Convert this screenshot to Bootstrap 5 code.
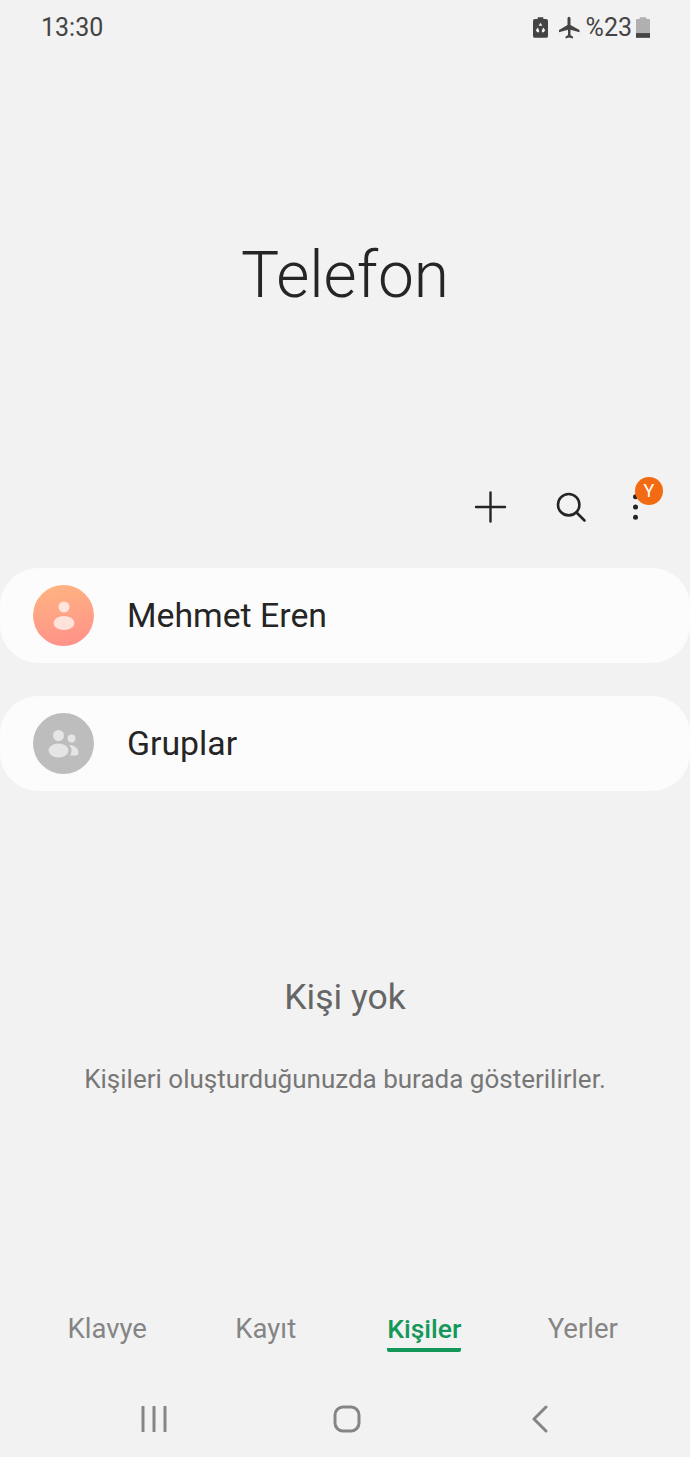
<!DOCTYPE html>
<html lang="tr">

<head>
  <meta charset="UTF-8">
  <title>Telefon</title>
  <link href="https://cdn.jsdelivr.net/npm/bootstrap@5.3.3/dist/css/bootstrap.min.css" rel="stylesheet">
  <script src="https://cdn.jsdelivr.net/npm/bootstrap@5.3.3/dist/js/bootstrap.bundle.min.js"></script>

  <style>
    html,
    body {
      height: 1457px;
      overflow: hidden;
    }

    body {
      background-color: #f2f2f2;
      font-family: Roboto, "Liberation Sans", sans-serif;
      color: #252525;
    }

    .phone-screen {
      width: 690px;
      height: 1457px;
    }

    .phone-screen > * {
      flex-shrink: 0;
    }

    .status-bar {
      height: 53px;
      padding: 2px 40px 0 41px;
      color: #444;
      font-size: 25px;
    }

    .status-right {
      gap: 5px;
    }

    .status-level {
      margin-right: -1px;
    }

    .app-title {
      height: 415px;
      padding-top: 183px;
      font-size: 64px;
      font-weight: 300;
      line-height: 80px;
      color: #252525;
    }

    .action-bar {
      height: 100px;
      padding-right: 49px;
      padding-bottom: 22px;
    }

    .action-item {
      position: relative;
      width: 34px;
      height: 34px;
    }

    .action-plus {
      margin-right: 47px;
    }

    .action-search {
      margin-right: 41px;
    }

    .action-more {
      width: 12px;
    }

    .more-badge {
      position: absolute;
      left: 6px;
      top: -13px;
      width: 28px;
      height: 28px;
      background-color: #f26b12;
      color: #fff;
      font-size: 18px;
      line-height: 28px;
      text-align: center;
      border-radius: 50%;
    }

    .pill-row {
      height: 95px;
      background-color: #fcfcfc;
      border-radius: 38px;
      padding-left: 33px;
      gap: 34px;
      font-size: 33.8px;
      margin-bottom: 33px;
    }

    .pill-name {
      padding-top: 2px;
      margin-left: -1px;
    }

    .avatar-circle {
      width: 61px;
      height: 61px;
      border-radius: 50%;
      flex-shrink: 0;
    }

    .avatar-me {
      background: linear-gradient(170deg, #ffb581, #ff8f8a);
    }

    .avatar-group {
      background-color: #bdbdbd;
    }

    .empty-block {
      padding-top: 148px;
      height: 484px;
    }

    .empty-title {
      font-size: 35.5px;
      line-height: 50px;
      color: #666;
    }

    .empty-text {
      font-size: 26px;
      line-height: 36px;
      color: #777;
      margin-top: 39px;
    }

    .tab-row {
      height: 72px;
      padding: 0 28px;
    }

    .tab-cell {
      width: 158.5px;
      text-align: center;
      font-size: 27.5px;
      color: #858585;
    }

    .tab-label {
      display: inline-block;
      line-height: 36px;
      height: 41px;
    }

    .tab-active {
      color: #14985a;
      font-weight: 500;
      font-size: 26.5px;
      border-bottom: 4px solid #14985a;
      border-radius: 2px;
    }

    .nav-keys {
      height: 78px;
      padding: 0 54px 0 57px;
    }
  </style>
</head>

<body>
  <div class="phone-screen d-flex flex-column">

    <div class="status-bar d-flex justify-content-between align-items-center">
      <span>13:30</span>
      <div class="status-right d-flex align-items-center">
        <svg width="15" height="21" viewBox="0 0 16 22">
          <path d="M5 0h6v2h3a2 2 0 0 1 2 2v16a2 2 0 0 1-2 2H2a2 2 0 0 1-2-2V4a2 2 0 0 1 2-2h3z" fill="#444" />
          <path d="M8 6l2 3H6zM11 11l2 3-1.500 2h-2v-2zM5 11l-2 3 1.500 2h2v-2z" fill="#f2f2f2" />
        </svg>
        <svg width="24" height="24" viewBox="0 0 24 24" class="ms-1">
          <path d="M10.500 2.500c0-1 .7-1.800 1.500-1.800s1.500.8 1.500 1.800V9l9 5v2.200l-9-2.500V19l2.500 1.800V22.500L12 21.500l-3.500 1v-1.700L11 19v-5.300l-9 2.500V14l8.500-5z" fill="#444" />
        </svg>
        <span class="status-level">%23</span>
        <svg width="14" height="21" viewBox="0 0 15 22">
          <path d="M4 0h7v2h3a1 1 0 0 1 1 1v19H0V3a1 1 0 0 1 1-1h3z" fill="#b0b0b0" />
          <rect y="17" width="15" height="5" fill="#444" />
        </svg>
      </div>
    </div>

    <div class="app-title text-center">Telefon</div>

    <div class="action-bar d-flex justify-content-end align-items-center">
      <div class="action-item action-plus">
        <svg width="34" height="34" viewBox="0 0 34 34">
          <path d="M17.500 2.500v29M3 17h29" stroke="#252525" stroke-width="2.400" stroke-linecap="round" />
        </svg>
      </div>
      <div class="action-item action-search">
        <svg width="34" height="34" viewBox="0 0 34 34">
          <circle cx="14.700" cy="14.700" r="10.700" fill="none" stroke="#252525" stroke-width="2.600" />
          <path d="M22.500 22.500l8 8" stroke="#252525" stroke-width="2.600" stroke-linecap="round" />
        </svg>
      </div>
      <div class="action-item action-more">
        <svg width="12" height="34" viewBox="0 0 12 34">
          <circle cx="6.500" cy="6.700" r="2.500" fill="#252525" />
          <circle cx="6.500" cy="17" r="2.500" fill="#252525" />
          <circle cx="6.500" cy="27.300" r="2.500" fill="#252525" />
        </svg>
        <span class="more-badge">Y</span>
      </div>
    </div>

    <div class="pill-row d-flex align-items-center">
      <div class="avatar-circle avatar-me d-flex align-items-center justify-content-center">
        <svg width="30" height="36" viewBox="0 0 30 36">
          <circle cx="15" cy="9" r="5.500" fill="#fff" opacity=".7" />
          <ellipse cx="15" cy="25" rx="10.500" ry="7" fill="#fff" opacity=".7" />
        </svg>
      </div>
      <span class="pill-name">Mehmet Eren</span>
    </div>

    <div class="pill-row d-flex align-items-center">
      <div class="avatar-circle avatar-group d-flex align-items-center justify-content-center">
        <svg width="34" height="34" viewBox="0 0 34 34">
          <circle cx="11.500" cy="8.500" r="5.500" fill="#fff" opacity=".6" />
          <circle cx="24.500" cy="11.500" r="4" fill="#fff" opacity=".6" />
          <ellipse cx="11.500" cy="23.500" rx="10" ry="7" fill="#fff" opacity=".6" />
          <path d="M22 18c5 0 9.500 3 9.500 8 0 1.500-1 2.500-2.500 2.500h-6c2-3 2.500-7 -1-10.500z" fill="#fff" opacity=".6" />
        </svg>
      </div>
      <span class="pill-name">Gruplar</span>
    </div>

    <div class="empty-block text-center">
      <div class="empty-title">Kişi yok</div>
      <div class="empty-text">Kişileri oluşturduğunuzda burada gösterilirler.</div>
    </div>

    <div class="tab-row d-flex">
      <div class="tab-cell"><span class="tab-label">Klavye</span></div>
      <div class="tab-cell"><span class="tab-label">Kayıt</span></div>
      <div class="tab-cell"><span class="tab-label tab-active">Kişiler</span></div>
      <div class="tab-cell"><span class="tab-label">Yerler</span></div>
    </div>

    <div class="nav-keys row g-0 align-items-center text-center">
      <div class="col-4">
        <svg width="26" height="26" viewBox="0 0 26 26">
          <path d="M2 1v24M13 1v24M24 1v24" stroke="#858585" stroke-width="3" stroke-linecap="round" />
        </svg>
      </div>
      <div class="col-4">
        <svg width="28" height="28" viewBox="0 0 28 28">
          <rect x="2" y="2" width="24" height="24" rx="8" fill="none" stroke="#858585" stroke-width="3" />
        </svg>
      </div>
      <div class="col-4">
        <svg width="18" height="28" viewBox="0 0 18 28">
          <path d="M15 2L3 14l12 12" fill="none" stroke="#858585" stroke-width="3" stroke-linecap="round" stroke-linejoin="round" />
        </svg>
      </div>
    </div>

  </div>
</body>

</html>
